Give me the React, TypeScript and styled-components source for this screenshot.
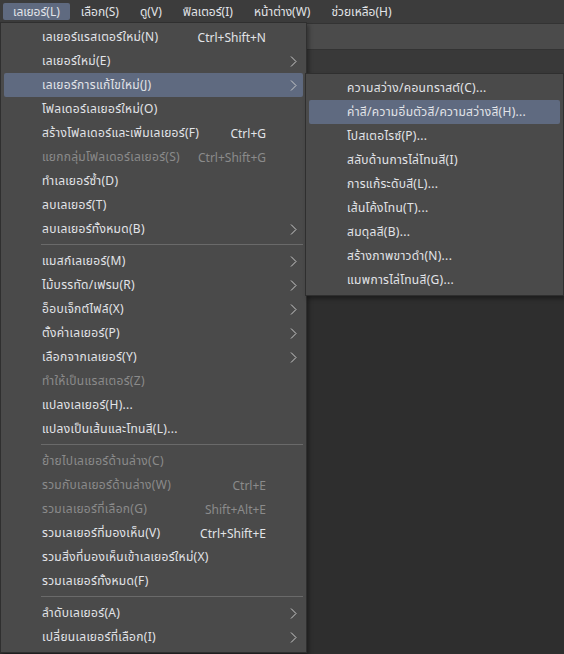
import styled, { createGlobalStyle } from "styled-components";

const GlobalStyle = createGlobalStyle`
  html, body {
    margin: 0;
    padding: 0;
    background: #2e2e2e;
    overflow: hidden;
  }
  body {
    font-family: "Noto Sans", "Noto Sans Thai", Tahoma, "DejaVu Sans", sans-serif;
    -webkit-font-smoothing: antialiased;
  }
`;

type Entry =
  | { sep: true }
  | {
      sep?: false;
      label: string;
      shortcut?: string;
      sub?: boolean;
      disabled?: boolean;
      active?: boolean;
    };

const topMenus = ["เลเยอร์(L)", "เลือก(S)", "ดู(V)", "ฟิลเตอร์(I)", "หน้าต่าง(W)", "ช่วยเหลือ(H)"];

const layerMenu: Entry[] = [
  { label: "เลเยอร์แรสเตอร์ใหม่(N)", shortcut: "Ctrl+Shift+N" },
  { label: "เลเยอร์ใหม่(E)", sub: true },
  { label: "เลเยอร์การแก้ไขใหม่(J)", sub: true, active: true },
  { label: "โฟลเดอร์เลเยอร์ใหม่(O)" },
  { label: "สร้างโฟลเดอร์และเพิ่มเลเยอร์(F)", shortcut: "Ctrl+G" },
  { label: "แยกกลุ่มโฟลเดอร์เลเยอร์(S)", shortcut: "Ctrl+Shift+G", disabled: true },
  { label: "ทำเลเยอร์ซ้ำ(D)" },
  { label: "ลบเลเยอร์(T)" },
  { label: "ลบเลเยอร์ทั้งหมด(B)", sub: true },
  { sep: true },
  { label: "แมสก์เลเยอร์(M)", sub: true },
  { label: "ไม้บรรทัด/เฟรม(R)", sub: true },
  { label: "อ็อบเจ็กต์ไฟล์(X)", sub: true },
  { label: "ตั้งค่าเลเยอร์(P)", sub: true },
  { label: "เลือกจากเลเยอร์(Y)", sub: true },
  { label: "ทำให้เป็นแรสเตอร์(Z)", disabled: true },
  { label: "แปลงเลเยอร์(H)..." },
  { label: "แปลงเป็นเส้นและโทนสี(L)..." },
  { sep: true },
  { label: "ย้ายไปเลเยอร์ด้านล่าง(C)", disabled: true },
  { label: "รวมกับเลเยอร์ด้านล่าง(W)", shortcut: "Ctrl+E", disabled: true },
  { label: "รวมเลเยอร์ที่เลือก(G)", shortcut: "Shift+Alt+E", disabled: true },
  { label: "รวมเลเยอร์ที่มองเห็น(V)", shortcut: "Ctrl+Shift+E" },
  { label: "รวมสิ่งที่มองเห็นเข้าเลเยอร์ใหม่(X)" },
  { label: "รวมเลเยอร์ทั้งหมด(F)" },
  { sep: true },
  { label: "ลำดับเลเยอร์(A)", sub: true },
  { label: "เปลี่ยนเลเยอร์ที่เลือก(I)", sub: true },
];

const correctionMenu: Entry[] = [
  { label: "ความสว่าง/คอนทราสต์(C)..." },
  { label: "ค่าสี/ความอิ่มตัวสี/ความสว่างสี(H)...", active: true },
  { label: "โปสเตอไรซ์(P)..." },
  { label: "สลับด้านการไล่โทนสี(I)" },
  { label: "การแก้ระดับสี(L)..." },
  { label: "เส้นโค้งโทน(T)..." },
  { label: "สมดุลสี(B)..." },
  { label: "สร้างภาพขาวดำ(N)..." },
  { label: "แมพการไล่โทนสี(G)..." },
];

const Screen = styled.div`
  position: relative;
  width: 564px;
  height: 654px;
  display: flex;
  flex-direction: column;
  background: #2e2e2e;
  overflow: hidden;
`;

const MenuBar = styled.div`
  height: 24px;
  display: flex;
  align-items: flex-start;
  padding: 3px 0 0 3px;
  box-sizing: border-box;
  background: #3c3c3c;
  border-bottom: 1px solid #333;
`;

const BarItem = styled.div<{ $open?: boolean }>`
  height: 17px;
  padding: 0 10px;
  margin-right: 1px;
  display: flex;
  align-items: center;
  border-radius: 2px;
  font-size: 12px;
  color: #e2e4e8;
  white-space: nowrap;
  background: ${(p) => (p.$open ? "#5f6a80" : "transparent")};
`;

const ToolBar = styled.div`
  height: 25px;
  background: #4b4b4b;
  border-bottom: 1px solid #333;
`;

const SubBar = styled.div`
  height: 23px;
  background: #393939;
  border-bottom: 1px solid #2a2a2a;
`;

const Workspace = styled.div`
  flex: 1;
  background: #2e2e2e;
`;

const Dropdown = styled.div<{ $top: number; $left: number; $width: number }>`
  position: absolute;
  top: ${(p) => p.$top}px;
  left: ${(p) => p.$left}px;
  width: ${(p) => p.$width}px;
  box-sizing: border-box;
  padding: 2px 3px 3px;
  background: #4a4a4a;
  border: 1px solid #2f2f2f;
  box-shadow: 2px 3px 4px rgba(0, 0, 0, 0.35);
  display: flex;
  flex-direction: column;
`;

const Row = styled.div<{ $active?: boolean; $disabled?: boolean; $arrowCol: number }>`
  height: 24px;
  display: grid;
  grid-template-columns: 1fr auto ${(p) => p.$arrowCol}px;
  align-items: center;
  padding-left: 38px;
  border-radius: 2px;
  font-size: 12px;
  white-space: nowrap;
  color: ${(p) => (p.$disabled ? "#8b8b8b" : "#e2e4e8")};
  background: ${(p) => (p.$active ? "#5f6a80" : "transparent")};
`;

const Label = styled.span`
  letter-spacing: 0.3px;
`;

const Shortcut = styled.span`
  text-align: right;
`;

const Arrow = styled.span`
  display: flex;
  justify-content: flex-end;
  padding-right: 6px;
  color: #c8c8c8;
`;

const Separator = styled.div`
  height: 1px;
  margin: 3px 0 4px 37px;
  background: #6a6a6a;
`;

function Chevron() {
  return (
    <svg width="7" height="11" viewBox="0 0 7 11">
      <polyline points="1,0.5 6,5.5 1,10.5" fill="none" stroke="currentColor" strokeWidth="1" />
    </svg>
  );
}

function MenuList({ items, arrowCol }: { items: Entry[]; arrowCol: number }) {
  return (
    <>
      {items.map((it, i) =>
        it.sep ? (
          <Separator key={i} />
        ) : (
          <Row key={i} $active={it.active} $disabled={it.disabled} $arrowCol={arrowCol}>
            <Label>{it.label}</Label>
            <Shortcut>{it.shortcut}</Shortcut>
            <Arrow>{it.sub && <Chevron />}</Arrow>
          </Row>
        )
      )}
    </>
  );
}

export default function App() {
  return (
    <>
      <GlobalStyle />
      <Screen>
        <MenuBar>
          {topMenus.map((m, i) => (
            <BarItem key={m} $open={i === 0}>
              {m}
            </BarItem>
          ))}
        </MenuBar>
        <ToolBar />
        <SubBar />
        <Workspace />

        <Dropdown $top={22} $left={0} $width={307}>
          <MenuList items={layerMenu} arrowCol={37} />
        </Dropdown>
        <Dropdown $top={73} $left={305} $width={259}>
          <MenuList items={correctionMenu} arrowCol={8} />
        </Dropdown>
      </Screen>
    </>
  );
}
